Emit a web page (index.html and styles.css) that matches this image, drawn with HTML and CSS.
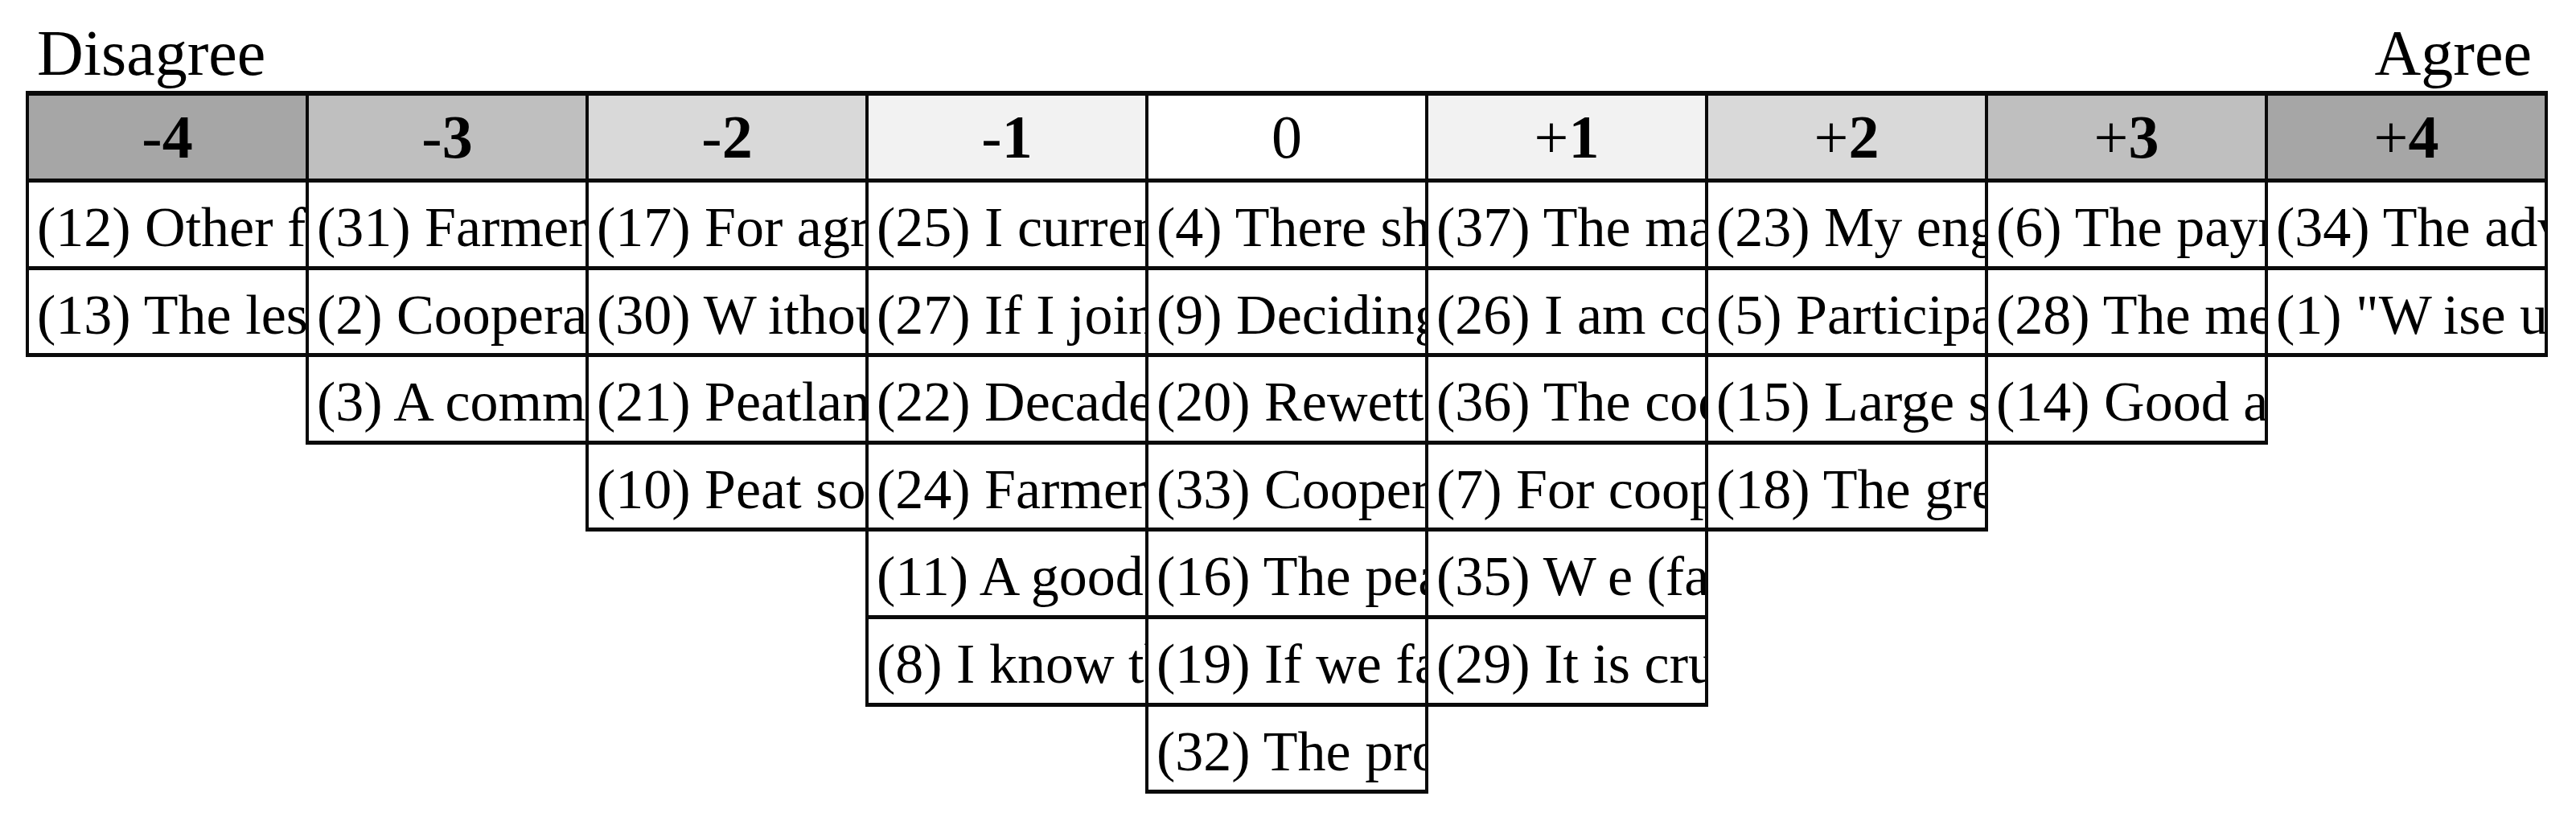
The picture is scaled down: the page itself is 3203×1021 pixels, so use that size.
FILE: index.html
```html
<!DOCTYPE html>
<html lang="en">
<head>
<meta charset="utf-8">
<title>Q-sort grid</title>
<link rel="stylesheet" href="styles.css">
</head>
<body>
<div class="page">
  <div class="labels"><span>Disagree</span><span>Agree</span></div>
  <div class="grid">
    <div class="col">
      <div class="head s4"><span class="sign">-</span><b>4</b></div>
      <div class="cell">(12) Other farmers</div>
      <div class="cell">(13) The less</div>
    </div>
    <div class="col">
      <div class="head s3"><span class="sign">-</span><b>3</b></div>
      <div class="cell">(31) Farmers</div>
      <div class="cell">(2) Cooperation</div>
      <div class="cell">(3) A community</div>
    </div>
    <div class="col">
      <div class="head s2"><span class="sign">-</span><b>2</b></div>
      <div class="cell">(17) For agriculture</div>
      <div class="cell">(30) <span class="w">W</span>ithout</div>
      <div class="cell">(21) Peatland</div>
      <div class="cell">(10) Peat soils</div>
    </div>
    <div class="col">
      <div class="head s1"><span class="sign">-</span><b>1</b></div>
      <div class="cell">(25) I currently</div>
      <div class="cell">(27) If I join</div>
      <div class="cell">(22) Decades</div>
      <div class="cell">(24) Farmers</div>
      <div class="cell">(11) A good</div>
      <div class="cell">(8) I know that</div>
    </div>
    <div class="col">
      <div class="head s0"><span class="sign">0</span></div>
      <div class="cell">(4) There should</div>
      <div class="cell">(9) Deciding</div>
      <div class="cell">(20) Rewetting</div>
      <div class="cell">(33) Cooperation</div>
      <div class="cell">(16) The peat</div>
      <div class="cell">(19) If we farmers</div>
      <div class="cell">(32) The project</div>
    </div>
    <div class="col">
      <div class="head s1"><span class="sign">+</span><b>1</b></div>
      <div class="cell">(37) The main</div>
      <div class="cell">(26) I am convinced</div>
      <div class="cell">(36) The cooperative</div>
      <div class="cell">(7) For cooperation</div>
      <div class="cell">(35) <span class="w">W</span>e (farmers)</div>
      <div class="cell">(29) It is crucial</div>
    </div>
    <div class="col">
      <div class="head s2"><span class="sign">+</span><b>2</b></div>
      <div class="cell">(23) My engagement</div>
      <div class="cell">(5) Participation</div>
      <div class="cell">(15) Large scale</div>
      <div class="cell">(18) The greatest</div>
    </div>
    <div class="col">
      <div class="head s3"><span class="sign">+</span><b>3</b></div>
      <div class="cell">(6) The payment</div>
      <div class="cell">(28) The measures</div>
      <div class="cell">(14) Good agricultural</div>
    </div>
    <div class="col">
      <div class="head s4"><span class="sign">+</span><b>4</b></div>
      <div class="cell">(34) The advantages</div>
      <div class="cell">(1) "<span class="w">W</span>ise use"</div>
    </div>
  </div>
</div>
</body>
</html>
```

FILE: styles.css
```css
html, body {
  margin: 0;
  padding: 0;
  background: #ffffff;
}

body {
  font-family: "Liberation Serif", "Times New Roman", serif;
  color: #000000;
}

.page {
  padding-left: 32px;
  width: 3136px;
}

.labels {
  display: flex;
  justify-content: space-between;
  font-size: 80px;
  line-height: 80px;
  padding: 26px 20px 0 14px;
}

.grid {
  display: flex;
  align-items: flex-start;
  margin-top: 7px;
}

.col {
  width: 352px;
  box-sizing: border-box;
  border: 4px solid #0a0a0a;
  border-top-width: 6px;
  border-bottom-width: 5px;
  display: flex;
  flex-direction: column;
}

.col + .col {
  margin-left: -4px;
}

.head {
  height: 103px;
  display: flex;
  align-items: center;
  justify-content: center;
  font-size: 76px;
  line-height: normal;
}

.head b {
  font-weight: bold;
}

.sign {
  font-weight: normal;
}

.s4 { background: #a6a6a6; }
.s3 { background: #bfbfbf; }
.s2 { background: #d9d9d9; }
.s1 { background: #f2f2f2; }
.s0 { background: #ffffff; }

.cell {
  border-top: 5px solid #0a0a0a;
  height: 108.6px;
  box-sizing: border-box;
  padding: 9px 0 0 10px;
  font-size: 70px;
  line-height: 94px;
  white-space: nowrap;
  overflow: hidden;
}

.w {
  margin-right: 0.2em;
}
```
